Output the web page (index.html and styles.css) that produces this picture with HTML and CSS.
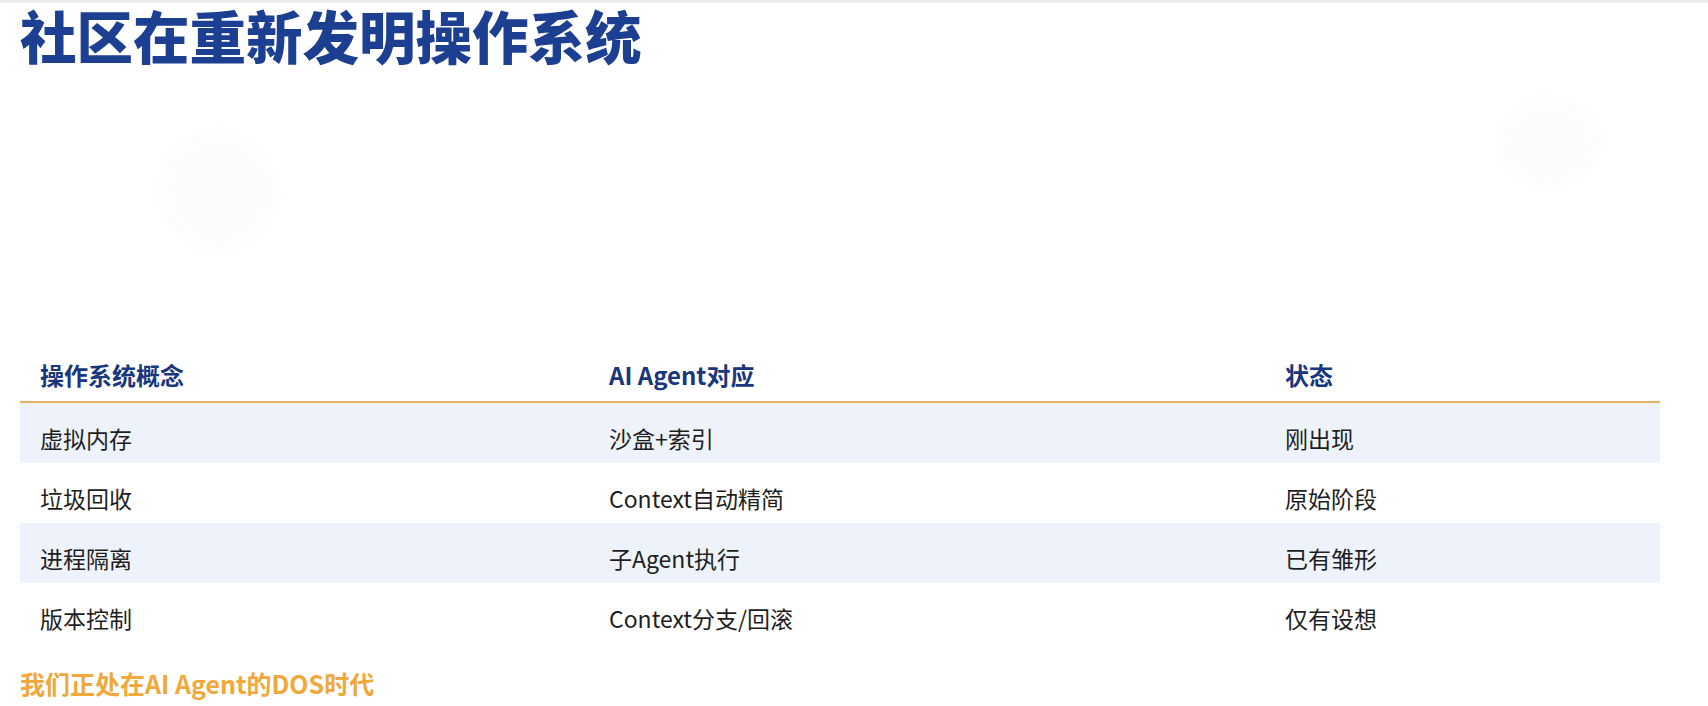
FILE: index.html
```html
<!DOCTYPE html>
<html lang="zh-CN">
<head>
<meta charset="utf-8">
<title>社区在重新发明操作系统</title>
<link rel="stylesheet" href="styles.css">
</head>
<body>
<div class="topstrip"></div>
<div class="page">
  <div class="blob blob-a"></div>
  <div class="blob blob-b"></div>
  <h1 class="title">社区在重新发明操作系统</h1>
  <div class="table">
    <div class="row head">
      <div class="cell">操作系统概念</div>
      <div class="cell">AI Agent对应</div>
      <div class="cell">状态</div>
    </div>
    <div class="row shade">
      <div class="cell">虚拟内存</div>
      <div class="cell">沙盒+索引</div>
      <div class="cell">刚出现</div>
    </div>
    <div class="row">
      <div class="cell">垃圾回收</div>
      <div class="cell">Context自动精简</div>
      <div class="cell">原始阶段</div>
    </div>
    <div class="row shade">
      <div class="cell">进程隔离</div>
      <div class="cell">子Agent执行</div>
      <div class="cell">已有雏形</div>
    </div>
    <div class="row">
      <div class="cell">版本控制</div>
      <div class="cell">Context分支/回滚</div>
      <div class="cell">仅有设想</div>
    </div>
  </div>
  <p class="note">我们正处在AI Agent的DOS时代</p>
</div>
</body>
</html>
```

FILE: styles.css
```css
html, body {
  margin: 0;
  padding: 0;
  background: #ffffff;
  font-family: "Noto Sans CJK SC", "Noto Sans", sans-serif;
}

.topstrip {
  height: 3px;
  background: #eeeef0;
}

.page {
  position: relative;
  padding: 0 48px 0 20px;
  height: 703px;
  overflow: hidden;
}

.blob {
  position: absolute;
  border-radius: 50%;
  background: #fcfcfe;
  filter: blur(6px);
}

.blob-a {
  left: 160px;
  top: 128px;
  width: 115px;
  height: 120px;
}

.blob-b {
  left: 1500px;
  top: 94px;
  width: 100px;
  height: 90px;
}

.title {
  position: relative;
  margin: 0;
  padding: 0;
  font-size: 56.5px;
  line-height: 62px;
  font-weight: 900;
  color: #1c3f92;
  white-space: nowrap;
}

.table {
  position: relative;
  margin-top: 278px;
}

.row {
  display: grid;
  grid-template-columns: 569px 676px 1fr;
  box-sizing: border-box;
  padding: 10px 0 0 20px;
  height: 60px;
  align-items: center;
  font-size: 23px;
  color: #1e1e1e;
}

.row.head {
  height: 60px;
  padding-top: 4px;
  border-bottom: 2px solid #e5b463;
  font-size: 24px;
  font-weight: 700;
  color: #19377c;
}

.row.shade {
  background: #eef2fa;
}

.note {
  position: relative;
  margin: 23px 0 0 0;
  font-size: 25px;
  line-height: 34px;
  font-weight: 700;
  color: #f0a83a;
}
```
